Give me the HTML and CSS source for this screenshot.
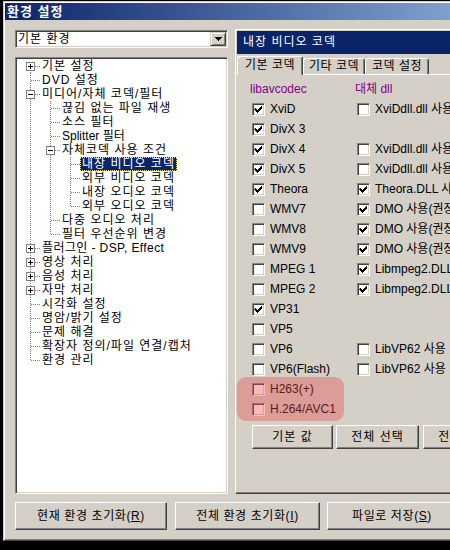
FILE: index.html
```html
<!DOCTYPE html>
<html lang="ko">
<head>
<meta charset="utf-8">
<title>환경 설정</title>
<link rel="stylesheet" href="styles.css">
</head>
<body>
<div class="window">
  <div class="titlebar">환경 설정</div>
  <div class="main">
    <div class="leftcol">
      <div class="combo">
        <span class="combo-text">기본 환경</span>
        <span class="combo-btn"><svg width="7" height="4" viewBox="0 0 7 4"><path d="M0 0h7v1h-1v1h-1v1h-1v1h-1v-1h-1v-1h-1v-1h-1z"/></svg></span>
      </div>
      <div class="tree">
        <div class="row"><span class="c first"><i class="exp plus"></i></span><span class="lbl">기본 설정</span></div>
        <div class="row"><span class="c tee"></span><span class="lbl">DVD 설정</span></div>
        <div class="row"><span class="c tee"><i class="exp"></i></span><span class="lbl">미디어/자체 코덱/필터</span></div>
        <div class="row"><span class="c pipe"></span><span class="c tee"></span><span class="lbl">끊김 없는 파일 재생</span></div>
        <div class="row"><span class="c pipe"></span><span class="c tee"></span><span class="lbl">소스 필터</span></div>
        <div class="row"><span class="c pipe"></span><span class="c tee"></span><span class="lbl lat">Splitter 필터</span></div>
        <div class="row"><span class="c pipe"></span><span class="c tee"><i class="exp"></i></span><span class="lbl">자체코덱 사용 조건</span></div>
        <div class="row"><span class="c pipe"></span><span class="c pipe"></span><span class="c tee"></span><span class="lbl sel">내장 비디오 코덱</span></div>
        <div class="row"><span class="c pipe"></span><span class="c pipe"></span><span class="c tee"></span><span class="lbl">외부 비디오 코덱</span></div>
        <div class="row"><span class="c pipe"></span><span class="c pipe"></span><span class="c tee"></span><span class="lbl">내장 오디오 코덱</span></div>
        <div class="row"><span class="c pipe"></span><span class="c pipe"></span><span class="c end"></span><span class="lbl">외부 오디오 코덱</span></div>
        <div class="row"><span class="c pipe"></span><span class="c tee"></span><span class="lbl">다중 오디오 처리</span></div>
        <div class="row"><span class="c pipe"></span><span class="c end"></span><span class="lbl">필터 우선순위 변경</span></div>
        <div class="row"><span class="c tee"><i class="exp plus"></i></span><span class="lbl mix">플러그인 - DSP, Effect</span></div>
        <div class="row"><span class="c tee"><i class="exp plus"></i></span><span class="lbl">영상 처리</span></div>
        <div class="row"><span class="c tee"><i class="exp plus"></i></span><span class="lbl">음성 처리</span></div>
        <div class="row"><span class="c tee"><i class="exp plus"></i></span><span class="lbl">자막 처리</span></div>
        <div class="row"><span class="c tee"></span><span class="lbl">시각화 설정</span></div>
        <div class="row"><span class="c tee"></span><span class="lbl">명암/밝기 설정</span></div>
        <div class="row"><span class="c tee"></span><span class="lbl">문제 해결</span></div>
        <div class="row"><span class="c tee"></span><span class="lbl">확장자 정의/파일 연결/캡처</span></div>
        <div class="row"><span class="c end"></span><span class="lbl">환경 관리</span></div>
      </div>
    </div>
    <div class="panel">
      <div class="panel-head">내장 비디오 코덱</div>
      <div class="tabs">
        <div class="tab sel">기본 코덱</div>
        <div class="tab t2">기타 코덱</div>
        <div class="tab t3">코덱 설정</div>
      </div>
      <div class="page">
        <div class="codecs">
          <div class="hd">libavcodec</div><div class="hd">대체 dll</div>

          <div class="opt"><span class="cb"><svg width="11" height="11" viewBox="0 0 11 11"><path transform="translate(1 1)" d="M1 3h1v1h1v1h1v-1h1v-1h1v-1h1v-1h1v3h-1v1h-1v1h-1v1h-1v1h-1v-1h-1v-1h-1v-1h-1z"/></svg></span>XviD</div>
          <div class="opt"><span class="cb"></span>XviDdll.dll 사용</div>

          <div class="opt"><span class="cb"><svg width="11" height="11" viewBox="0 0 11 11"><path transform="translate(1 1)" d="M1 3h1v1h1v1h1v-1h1v-1h1v-1h1v-1h1v3h-1v1h-1v1h-1v1h-1v1h-1v-1h-1v-1h-1v-1h-1z"/></svg></span>DivX 3</div>
          <div class="opt"></div>

          <div class="opt"><span class="cb"><svg width="11" height="11" viewBox="0 0 11 11"><path transform="translate(1 1)" d="M1 3h1v1h1v1h1v-1h1v-1h1v-1h1v-1h1v3h-1v1h-1v1h-1v1h-1v1h-1v-1h-1v-1h-1v-1h-1z"/></svg></span>DivX 4</div>
          <div class="opt"><span class="cb"></span>XviDdll.dll 사용</div>

          <div class="opt"><span class="cb"><svg width="11" height="11" viewBox="0 0 11 11"><path transform="translate(1 1)" d="M1 3h1v1h1v1h1v-1h1v-1h1v-1h1v-1h1v3h-1v1h-1v1h-1v1h-1v1h-1v-1h-1v-1h-1v-1h-1z"/></svg></span>DivX 5</div>
          <div class="opt"><span class="cb"></span>XviDdll.dll 사용</div>

          <div class="opt"><span class="cb"><svg width="11" height="11" viewBox="0 0 11 11"><path transform="translate(1 1)" d="M1 3h1v1h1v1h1v-1h1v-1h1v-1h1v-1h1v3h-1v1h-1v1h-1v1h-1v1h-1v-1h-1v-1h-1v-1h-1z"/></svg></span>Theora</div>
          <div class="opt"><span class="cb"><svg width="11" height="11" viewBox="0 0 11 11"><path transform="translate(1 1)" d="M1 3h1v1h1v1h1v-1h1v-1h1v-1h1v-1h1v3h-1v1h-1v1h-1v1h-1v1h-1v-1h-1v-1h-1v-1h-1z"/></svg></span>Theora.DLL 사용</div>

          <div class="opt"><span class="cb"></span>WMV7</div>
          <div class="opt"><span class="cb"><svg width="11" height="11" viewBox="0 0 11 11"><path transform="translate(1 1)" d="M1 3h1v1h1v1h1v-1h1v-1h1v-1h1v-1h1v3h-1v1h-1v1h-1v1h-1v1h-1v-1h-1v-1h-1v-1h-1z"/></svg></span>DMO 사용(권장)</div>

          <div class="opt"><span class="cb"></span>WMV8</div>
          <div class="opt"><span class="cb"><svg width="11" height="11" viewBox="0 0 11 11"><path transform="translate(1 1)" d="M1 3h1v1h1v1h1v-1h1v-1h1v-1h1v-1h1v3h-1v1h-1v1h-1v1h-1v1h-1v-1h-1v-1h-1v-1h-1z"/></svg></span>DMO 사용(권장)</div>

          <div class="opt"><span class="cb"></span>WMV9</div>
          <div class="opt"><span class="cb"><svg width="11" height="11" viewBox="0 0 11 11"><path transform="translate(1 1)" d="M1 3h1v1h1v1h1v-1h1v-1h1v-1h1v-1h1v3h-1v1h-1v1h-1v1h-1v1h-1v-1h-1v-1h-1v-1h-1z"/></svg></span>DMO 사용(권장)</div>

          <div class="opt"><span class="cb"></span>MPEG 1</div>
          <div class="opt"><span class="cb"><svg width="11" height="11" viewBox="0 0 11 11"><path transform="translate(1 1)" d="M1 3h1v1h1v1h1v-1h1v-1h1v-1h1v-1h1v3h-1v1h-1v1h-1v1h-1v1h-1v-1h-1v-1h-1v-1h-1z"/></svg></span>Libmpeg2.DLL 사용</div>

          <div class="opt"><span class="cb"></span>MPEG 2</div>
          <div class="opt"><span class="cb"><svg width="11" height="11" viewBox="0 0 11 11"><path transform="translate(1 1)" d="M1 3h1v1h1v1h1v-1h1v-1h1v-1h1v-1h1v3h-1v1h-1v1h-1v1h-1v1h-1v-1h-1v-1h-1v-1h-1z"/></svg></span>Libmpeg2.DLL 사용</div>

          <div class="opt"><span class="cb"><svg width="11" height="11" viewBox="0 0 11 11"><path transform="translate(1 1)" d="M1 3h1v1h1v1h1v-1h1v-1h1v-1h1v-1h1v3h-1v1h-1v1h-1v1h-1v1h-1v-1h-1v-1h-1v-1h-1z"/></svg></span>VP31</div>
          <div class="opt"></div>

          <div class="opt"><span class="cb"></span>VP5</div>
          <div class="opt"></div>

          <div class="opt"><span class="cb"></span>VP6</div>
          <div class="opt"><span class="cb"></span>LibVP62 사용</div>

          <div class="opt"><span class="cb"></span>VP6(Flash)</div>
          <div class="opt"><span class="cb"></span>LibVP62 사용</div>

          <div class="opt"><span class="cb"></span>H263(+)</div>
          <div class="opt"></div>

          <div class="opt"><span class="cb"></span>H.264/AVC1</div>
          <div class="opt"></div>
        </div>
        <div class="page-btns">
          <div class="btn b1">기본 값</div>
          <div class="btn b2">전체 선택</div>
          <div class="btn b3">전체 해제</div>
        </div>
        <div class="mark"></div>
      </div>
    </div>
  </div>
  <div class="bottom">
    <div class="btn big1">현재 환경 초기화(<u>R</u>)</div>
    <div class="btn big2">전체 환경 초기화(<u>I</u>)</div>
    <div class="btn big3">파일로 저장(<u>S</u>)</div>
  </div>
</div>
</body>
</html>
```

FILE: styles.css
```css
html, body {
  margin: 0;
  height: 100%;
  overflow: hidden;
  background: #000;
}

body {
  font: 12px/14px "Liberation Sans", "Noto Sans CJK KR", sans-serif;
  color: #000;
}

.window {
  box-sizing: border-box;
  width: 600px;
  height: 540px;
  margin: 1px 0 0 3px;
  border: 1px solid;
  border-color: #d4d0c8 #404040 #404040 #d4d0c8;
  box-shadow: inset 1px 1px #fff, inset -1px -1px #808080;
  padding: 1px;
  background: #d4d0c8;
  display: flex;
  flex-direction: column;
}

.titlebar {
  flex: none;
  height: 17px;
  line-height: 17px;
  padding-left: 2px;
  background: linear-gradient(to right, #0a246a, #a6caf0);
  color: #fff;
  font-weight: bold;
  font-size: 13px;
  letter-spacing: 1px;
  white-space: nowrap;
}

.main {
  flex: none;
  display: flex;
  height: 465px;
  margin-top: 9px;
  padding: 0 10px;
}

.leftcol {
  width: 213px;
  flex: none;
  display: flex;
  flex-direction: column;
}

.combo {
  box-sizing: border-box;
  height: 18px;
  margin-top: 1px;
  border: 1px solid;
  border-color: #808080 #fff #fff #808080;
  box-shadow: inset 1px 1px #404040, inset -1px -1px #d4d0c8;
  padding: 1px;
  background: #fff;
  display: flex;
  align-items: center;
}

.combo-text {
  padding-left: 1px;
  line-height: 14px;
  letter-spacing: 1px;
}

.combo-btn {
  margin-left: auto;
  box-sizing: border-box;
  width: 16px;
  height: 14px;
  border: 1px solid;
  border-color: #d4d0c8 #404040 #404040 #d4d0c8;
  box-shadow: inset 1px 1px #fff, inset -1px -1px #808080;
  background: #d4d0c8;
  display: flex;
  align-items: center;
  justify-content: center;
}

.combo-btn svg {
  display: block;
}

.tree {
  flex: 1;
  margin-top: 9px;
  box-sizing: border-box;
  border: 1px solid;
  border-color: #808080 #fff #fff #808080;
  box-shadow: inset 1px 1px #404040, inset -1px -1px #d4d0c8;
  padding: 1px 0 0 4px;
  background: #fff;
}

.row {
  display: flex;
  height: 14px;
  white-space: nowrap;
}

.c {
  --vd: repeating-linear-gradient(to bottom, #808080 0 1px, transparent 1px 2px);
  --hd: repeating-linear-gradient(to right, #808080 0 1px, transparent 1px 2px);
  flex: none;
  width: 20px;
  height: 14px;
  display: flex;
  align-items: flex-start;
  background-repeat: no-repeat;
}

.pipe {
  background-image: var(--vd);
  background-size: 1px 14px;
  background-position: 10px 0;
}

.tee {
  background-image: var(--vd), var(--hd);
  background-size: 1px 14px, 9px 1px;
  background-position: 10px 0, 11px 7px;
}

.end {
  background-image: var(--vd), var(--hd);
  background-size: 1px 8px, 9px 1px;
  background-position: 10px 0, 11px 7px;
}

.first {
  background-image: var(--vd), var(--hd);
  background-size: 1px 7px, 9px 1px;
  background-position: 10px 7px, 11px 7px;
}

.exp {
  box-sizing: border-box;
  width: 9px;
  height: 9px;
  margin: 3px 0 0 6px;
  border: 1px solid #808080;
  background: linear-gradient(#000, #000) center / 5px 1px no-repeat, #fff;
}

.exp.plus {
  background: linear-gradient(#000, #000) center / 5px 1px no-repeat,
              linear-gradient(#000, #000) center / 1px 5px no-repeat, #fff;
}

.lbl {
  padding: 0 2px;
  height: 14px;
  line-height: 14px;
  letter-spacing: 1px;
}

.lbl.lat {
  letter-spacing: 0;
}

.lbl.mix {
  letter-spacing: 0.4px;
}

.lbl.sel {
  background: #0a246a;
  color: #fff;
  outline: 1px dotted #e8e07c;
  outline-offset: -1px;
}

.panel {
  flex: 1;
  min-width: 0;
  margin-left: 7px;
  border: 1px solid;
  border-color: #fff #404040 #404040 #fff;
  box-shadow: inset -1px -1px #808080;
  padding: 1px;
  display: flex;
  flex-direction: column;
}

.panel-head {
  flex: none;
  height: 23px;
  line-height: 23px;
  padding-left: 6px;
  background: #0a246a;
  color: #fff;
  letter-spacing: 1px;
  white-space: nowrap;
}

.tabs {
  flex: none;
  display: flex;
  align-items: flex-end;
  height: 18px;
  margin-top: 2px;
}

.tab {
  box-sizing: border-box;
  height: 16px;
  line-height: 15px;
  border: 1px solid;
  border-bottom: none;
  border-color: #fff #404040 #fff #fff;
  box-shadow: inset -1px 0 #808080;
  border-radius: 3px 3px 0 0;
  background: #d4d0c8;
  text-align: center;
  letter-spacing: 0.5px;
  white-space: nowrap;
}

.tab.sel {
  width: 66px;
  height: 19px;
  line-height: 17px;
  margin-bottom: -1px;
  position: relative;
  z-index: 1;
}

.tab.t2 {
  width: 62px;
}

.tab.t3 {
  width: 64px;
}

.page {
  flex: 1;
  position: relative;
  border-top: 1px solid #fff;
  padding: 4px 0 0 15px;
}

.codecs {
  display: grid;
  grid-template-columns: 105px max-content;
  grid-auto-rows: 20px;
}

.hd {
  color: #800080;
  margin-left: -2px;
  line-height: 20px;
  white-space: nowrap;
}

.opt {
  display: flex;
  align-items: center;
  gap: 5px;
  white-space: nowrap;
}

.cb {
  flex: none;
  box-sizing: border-box;
  width: 13px;
  height: 13px;
  border: 1px solid;
  border-color: #808080 #fff #fff #808080;
  box-shadow: inset 1px 1px #404040, inset -1px -1px #d4d0c8;
  background: #fff;
}

.cb svg {
  display: block;
}

.btn {
  box-sizing: border-box;
  flex: none;
  border: 1px solid;
  border-color: #fff #404040 #404040 #fff;
  box-shadow: inset -1px -1px #808080, inset 1px 1px #d4d0c8;
  background: #d4d0c8;
  display: flex;
  align-items: center;
  justify-content: center;
  letter-spacing: 0.6px;
  white-space: nowrap;
}

.page-btns {
  display: flex;
  margin-top: 6px;
}

.page-btns .btn {
  height: 24px;
  letter-spacing: 1px;
}

.b1 {
  width: 81px;
}

.b2 {
  width: 83px;
  margin-left: 3px;
}

.b3 {
  width: 83px;
  margin-left: 4px;
}

.mark {
  position: absolute;
  left: 0;
  top: 302px;
  width: 107px;
  height: 44px;
  border-radius: 9px;
  background: rgba(235, 70, 70, 0.38);
}

.bottom {
  flex: none;
  display: flex;
  margin-top: 8px;
  padding-left: 10px;
}

.bottom .btn {
  height: 28px;
}

.big1 {
  width: 152px;
}

.big2 {
  width: 145px;
  margin-left: 8px;
}

.big3 {
  width: 130px;
  margin-left: 7px;
}
```
